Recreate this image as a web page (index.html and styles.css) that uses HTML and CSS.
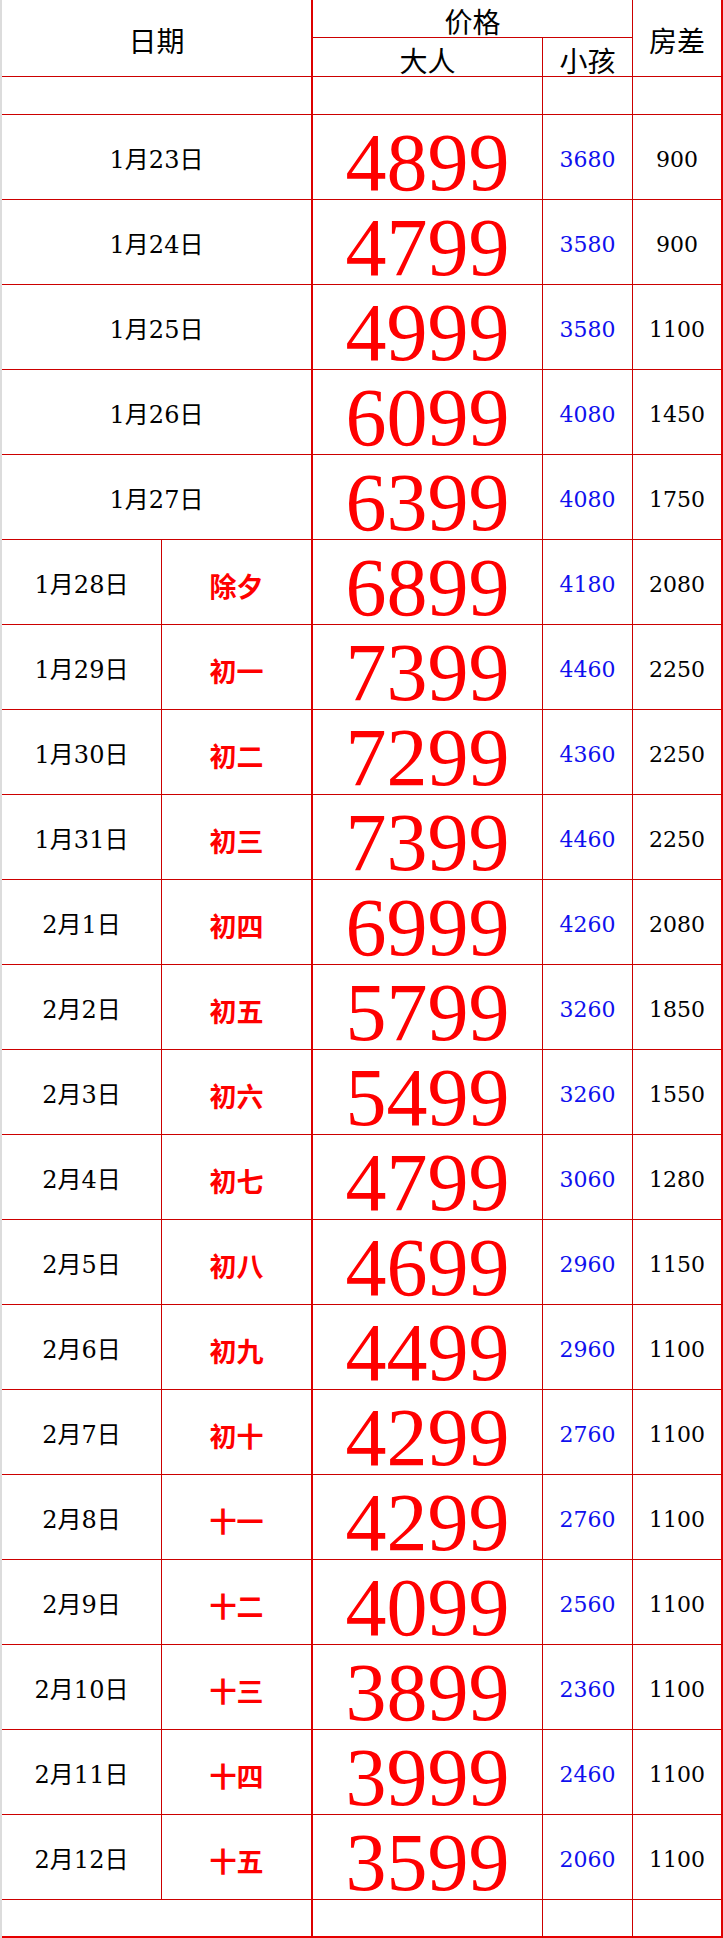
FILE: index.html
```html
<!DOCTYPE html>
<html lang="zh">
<head>
<meta charset="utf-8">
<title>价格表</title>
<link rel="stylesheet" href="styles.css">
</head>
<body>
<div class="sheet">
  <div class="grid">
    <div class="c h span2 rspan2 br2">日期</div>
    <div class="c h h1 span2 br1">价格</div>
    <div class="c h rspan2 br2 h-fc">房差</div>
    <div class="c h h2 br1">大人</div>
    <div class="c h h2 br1">小孩</div>

    <div class="c span2 br2"></div>
    <div class="c br1"></div>
    <div class="c br1"></div>
    <div class="c br2"></div>
  </div>
</div>
<script src="app.js"></script>
</body>
</html>
```

FILE: app.js
```js
const rows = [
  ["1月23日", "", "4899", "3680", "900"],
  ["1月24日", "", "4799", "3580", "900"],
  ["1月25日", "", "4999", "3580", "1100"],
  ["1月26日", "", "6099", "4080", "1450"],
  ["1月27日", "", "6399", "4080", "1750"],
  ["1月28日", "除夕", "6899", "4180", "2080"],
  ["1月29日", "初一", "7399", "4460", "2250"],
  ["1月30日", "初二", "7299", "4360", "2250"],
  ["1月31日", "初三", "7399", "4460", "2250"],
  ["2月1日", "初四", "6999", "4260", "2080"],
  ["2月2日", "初五", "5799", "3260", "1850"],
  ["2月3日", "初六", "5499", "3260", "1550"],
  ["2月4日", "初七", "4799", "3060", "1280"],
  ["2月5日", "初八", "4699", "2960", "1150"],
  ["2月6日", "初九", "4499", "2960", "1100"],
  ["2月7日", "初十", "4299", "2760", "1100"],
  ["2月8日", "十一", "4299", "2760", "1100"],
  ["2月9日", "十二", "4099", "2560", "1100"],
  ["2月10日", "十三", "3899", "2360", "1100"],
  ["2月11日", "十四", "3999", "2460", "1100"],
  ["2月12日", "十五", "3599", "2060", "1100"]
];
const grid = document.querySelector('.grid');
function cell(cls, text) {
  const d = document.createElement('div');
  d.className = 'c ' + cls;
  if (text) {
    const s = document.createElement('span');
    s.textContent = text;
    d.appendChild(s);
  }
  grid.appendChild(d);
}
rows.forEach(r => {
  if (r[1]) {
    cell('date br1', r[0]);
    cell('lunar br2', r[1]);
  } else {
    cell('date span2 br2', r[0]);
  }
  cell('adult br1', r[2]);
  cell('child br1', r[3]);
  cell('diff br2', r[4]);
});
cell('last span2 br2', '');
cell('last br1', '');
cell('last br1', '');
cell('last br2', '');
```

FILE: styles.css
```css
html, body {
  margin: 0;
  padding: 0;
  background: #ffffff;
}
.sheet {
  width: 721px;
  border-left: 2px solid #dcdcdc;
}
.grid {
  display: grid;
  grid-template-columns: 160px 151px 230px 90px 90px;
  grid-template-rows: 38px 39px 38px repeat(21, 85px) 38px;
}
.c {
  box-sizing: border-box;
  border-bottom: 1px solid #cc0000;
  display: flex;
  align-items: center;
  justify-content: center;
  color: #000;
  font-family: "DejaVu Serif", "Noto Sans CJK SC", serif;
}
.span2 { grid-column: span 2; }
.rspan2 { grid-row: span 2; }
.br1 { border-right: 1px solid #cc0000; }
.br2 { border-right: 2px solid #dd0000; }
.h {
  font-family: "Noto Sans CJK SC", sans-serif;
  font-size: 28px;
  line-height: 1;
  padding-top: 4px;
}
.h1 { padding-top: 5px; }
.h2 { padding-top: 6px; }
.date {
  font-size: 24px;
  line-height: 1;
  padding-top: 6px;
}
.lunar {
  font-family: "Noto Sans CJK SC", sans-serif;
  font-weight: 700;
  color: #ff0000;
  font-size: 27px;
  line-height: 1;
  padding-top: 6px;
}
.adult {
  font-family: "Liberation Serif", serif;
  color: #ff0000;
  font-size: 82px;
  line-height: 1;
  padding-top: 12px;
}
.child {
  color: #1010ee;
  font-size: 22px;
  line-height: 1;
  padding-top: 6px;
}
.diff {
  font-size: 22px;
  line-height: 1;
  padding-top: 6px;
}
.last {
  border-bottom: 2px solid #e60000;
}
```
